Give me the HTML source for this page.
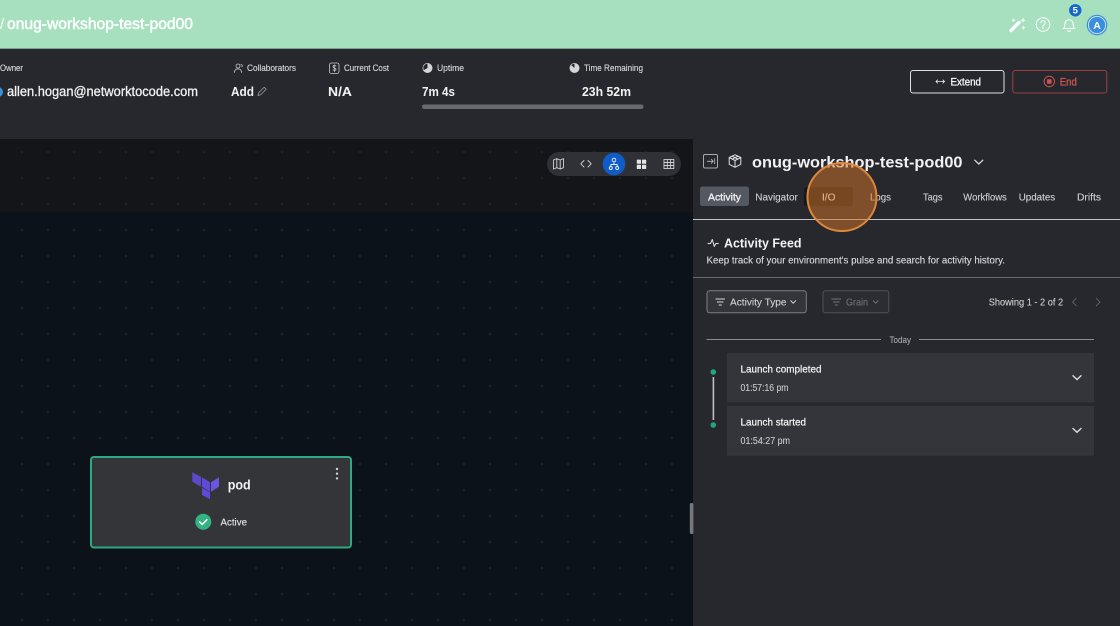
<!DOCTYPE html>
<html><head><meta charset="utf-8"><style>
html,body{margin:0;padding:0;background:#27282e;width:1120px;height:626px;overflow:hidden}
svg{display:block;filter:blur(.35px)}
text{font-family:"Liberation Sans",sans-serif;fill:#f2f2f2}
.m{stroke:currentColor;stroke-width:.25;color:#f2f2f2}
.b{font-weight:700}
.l{font-size:9px;fill:#d9dadb;stroke:#d9dadb;stroke-width:.12}
.v{font-size:13px;font-weight:700}
.t{font-size:10.500px;fill:#cfd0d2;stroke:#cfd0d2;stroke-width:.12}
.i{fill:none;stroke:#c9cacb;stroke-width:1;stroke-linecap:round;stroke-linejoin:round}
</style></head><body>
<svg width="1120" height="626" viewBox="0 0 1120 626" xmlns="http://www.w3.org/2000/svg">
<defs>
<pattern id="d" x="9" y="139" width="26" height="26" patternUnits="userSpaceOnUse"><circle cx="13" cy="13" r="1.300" fill="#1d2229"/></pattern>
</defs>
<!-- base -->
<rect width="1120" height="626" fill="#27282e"/>
<rect y="0" width="1120" height="49" fill="#a6e0bf"/>
<rect y="48" width="1120" height="1" fill="#7f9f90"/>
<!-- canvas -->
<rect x="0" y="139" width="693" height="487" fill="#0b121a"/>
<rect x="0" y="139" width="693" height="73" fill="#131519"/>
<rect x="0" y="139" width="693" height="487" fill="url(#d)"/>
<!-- header title -->
<text x="0" y="29" font-size="15" style="fill:#fff">/</text>
<text x="7" y="29" font-size="15.500" class="m" style="color:#fff;fill:#fff;stroke-width:.45" textLength="186" lengthAdjust="spacingAndGlyphs">onug-workshop-test-pod00</text>
<!-- header icons -->
<g fill="none" stroke="#fff" stroke-linecap="round">
<path d="M1011 30.500L1019 22.500" stroke-width="3.400"/>
<path d="M1023 18.500v3.500M1021.300 20.200h3.400M1013.500 19v2.400M1012.300 20.200h2.400M1023.500 26.500v2.400M1022.300 27.700h2.400" stroke-width="1"/>
<circle cx="1043" cy="24.500" r="6.800" stroke-width="1"/>
<path d="M1040.800 22.800a2.200 2.200 0 1 1 3.400 1.900c-.8.500-1.200.9-1.200 1.700" stroke-width="1"/>
<circle cx="1043" cy="28" r=".4" stroke-width=".8"/>
<path d="M1063.500 28.500c1.200-1.200 1.300-2.500 1.300-4.500a4.200 4.200 0 0 1 8.400 0c0 2 .1 3.300 1.300 4.500z" stroke-width="1"/>
<path d="M1067.500 30.500a1.600 1.600 0 0 0 3 0" stroke-width="1"/>
</g>
<circle cx="1075.300" cy="10.300" r="6.200" fill="#1468c8"/>
<text x="1075.300" y="13.700" font-size="9.500" class="b" text-anchor="middle" style="fill:#fff">5</text>
<circle cx="1097" cy="25" r="10.300" fill="#3a8fdc"/>
<circle cx="1097" cy="25" r="8.600" fill="#3a8fdc" stroke="#d5e8f6" stroke-width=".9"/>
<text x="1097" y="29" font-size="10.500" class="b" text-anchor="middle" style="fill:#fff">A</text>
<!-- stats labels -->
<text x="0" y="70.800" class="l" textLength="23" lengthAdjust="spacingAndGlyphs">Owner</text>
<text x="247" y="70.800" class="l" textLength="49" lengthAdjust="spacingAndGlyphs">Collaborators</text>
<text x="344" y="70.800" class="l" textLength="45" lengthAdjust="spacingAndGlyphs">Current Cost</text>
<text x="437" y="70.800" class="l" textLength="27" lengthAdjust="spacingAndGlyphs">Uptime</text>
<text x="584" y="70.800" class="l" textLength="59" lengthAdjust="spacingAndGlyphs">Time Remaining</text>
<!-- stat icons -->
<g class="i" style="stroke-width:.8">
<circle cx="238" cy="66" r="2"/><path d="M234.500 72.500c0-2.500 1.500-3.600 3.500-3.600s3.500 1.100 3.500 3.600M241 64.500a1.500 1.500 0 0 1 1 2.400"/>
<rect x="329.500" y="63" width="9.500" height="10.500" rx="2"/>
<path d="M336 66c-.6-.6-3-.8-3 .7s3 1 3 2.500-2.400 1.300-3 .7M334.300 64.800v7"/>
<circle cx="427.500" cy="68" r="4.600"/>
<circle cx="574.500" cy="68" r="4.600"/>
</g>
<path d="M427.500 68V63.400A4.600 4.600 0 1 1 423.500 70.300z" fill="#d4d5d6"/>
<path d="M574.500 68V63.400A4.600 4.600 0 1 1 570.500 70.300A4.600 4.600 0 0 1 571 65z" fill="#d4d5d6"/>
<!-- stats values -->
<circle cx="-2" cy="92" r="5" fill="#3d8fd9"/>
<text x="7" y="95.800" font-size="14" class="m" style="stroke-width:.3" textLength="191" lengthAdjust="spacingAndGlyphs">allen.hogan@networktocode.com</text>
<text x="231" y="95.800" class="v" textLength="23" lengthAdjust="spacingAndGlyphs">Add</text>
<path d="M258 95.500l.7-2.700 5.500-5.500 2 2-5.500 5.500z" class="i" style="stroke-width:.7;stroke:#a9aaac"/>
<text x="328" y="95.800" class="v" textLength="24" lengthAdjust="spacingAndGlyphs">N/A</text>
<text x="422" y="95.800" class="v" textLength="33" lengthAdjust="spacingAndGlyphs">7m 4s</text>
<text x="582" y="95.800" class="v" textLength="49" lengthAdjust="spacingAndGlyphs">23h 52m</text>
<rect x="422" y="104.500" width="221.500" height="4.500" rx="2.200" fill="#696a6d"/>
<!-- buttons -->
<rect x="910.500" y="70.500" width="93.500" height="22.500" rx="2.500" fill="none" stroke="#e0e0e0" stroke-width="1"/>
<path d="M936 81.500h8.500M937.800 79.700L936 81.500l1.800 1.800M942.700 79.700l1.800 1.800-1.800 1.800" fill="none" stroke="#eee" stroke-width=".8"/>
<text x="950.500" y="85.500" font-size="11" class="m" style="stroke-width:.35" textLength="30.500" lengthAdjust="spacingAndGlyphs">Extend</text>
<rect x="1012.800" y="70.500" width="94" height="22.500" rx="2.500" fill="none" stroke="#9a413c" stroke-width="1"/>
<circle cx="1049.300" cy="81.500" r="5.200" fill="none" stroke="#c9544b" stroke-width="1"/>
<rect x="1047" y="79.200" width="4.600" height="4.600" rx=".8" fill="#c9544b"/>
<text x="1059.800" y="85.500" font-size="11" class="m" style="fill:#c9544b;color:#c9544b;stroke-width:.35" textLength="17" lengthAdjust="spacingAndGlyphs">End</text>
<!-- toolbar -->
<rect x="547" y="152" width="134" height="24" rx="12" fill="#2f3136"/>
<circle cx="614" cy="164" r="11.300" fill="#0f5cc8"/>
<g class="i" style="stroke-width:.9;stroke:#d0d1d2">
<path d="M553.500 160l3.300-1.300 3.400 1.300 3.300-1.300v9l-3.300 1.300-3.400-1.300-3.300 1.300zM556.800 158.700v9M560.200 160v9"/>
<path d="M584 160.500l-3.200 3.300 3.200 3.300M588 160.500l3.200 3.300-3.200 3.300"/>
</g>
<g class="i" style="stroke-width:.9;stroke:#e8f0fa">
<circle cx="614" cy="160" r="1.800"/><circle cx="610.800" cy="168" r="1.500"/><circle cx="617.200" cy="168" r="1.500"/>
<path d="M614 162v2.500M610.800 166.500v-2h6.400v2"/>
</g>
<g fill="#e4e4e5">
<rect x="636.800" y="159.600" width="4.200" height="4.200" rx=".6"/><rect x="642" y="159.600" width="4.200" height="4.200" rx=".6"/>
<rect x="636.800" y="164.800" width="4.200" height="4.200" rx=".6"/><rect x="642" y="164.800" width="4.200" height="4.200" rx=".6"/>
</g>
<g fill="none" stroke="#d0d1d2" stroke-width=".9">
<rect x="664" y="159.500" width="9.800" height="9"/><path d="M664 162.500h9.800M664 165.500h9.800M667.300 159.500v9M670.600 159.500v9"/>
</g>
<!-- panel -->
<rect x="693" y="139" width="427" height="487" fill="#27282e"/>
<rect x="689.800" y="503" width="3.600" height="31" rx="1.500" fill="#77787c"/>
<!-- panel head -->
<rect x="703.500" y="154.500" width="14" height="13.500" rx="1.500" fill="none" stroke="#a9aaac" stroke-width="1"/>
<path d="M707 161.300h6M711 159l2.200 2.300-2.200 2.300M714.700 158.500v5.600" fill="none" stroke="#b9babc" stroke-width=".8"/>
<g class="i" style="stroke-width:1;stroke:#e0e0e1">
<path d="M735 154.800l5.800 2.700v6.800l-5.800 3-5.800-3v-6.800zM729.200 157.500l5.800 3 5.800-3M735 160.500v6.800M732 156.200l5.800 2.900M738 156.200l-5.800 2.900"/>
</g>
<text x="752" y="167.500" font-size="16" class="b" textLength="210.500" lengthAdjust="spacingAndGlyphs">onug-workshop-test-pod00</text>
<path d="M974.800 160.200l4 3.800 4-3.800" fill="none" stroke="#d8d8d9" stroke-width="1.300" stroke-linecap="round"/>
<!-- tabs -->
<rect x="700" y="186.500" width="49" height="19.500" rx="2.500" fill="#545861"/>
<rect x="804" y="187" width="49" height="19" rx="2.500" fill="#17181b"/>
<text x="708" y="200.700" font-size="10.500" class="m" style="stroke-width:.3" textLength="33" lengthAdjust="spacingAndGlyphs">Activity</text>
<text x="755.300" y="200.700" class="t" textLength="42.500" lengthAdjust="spacingAndGlyphs">Navigator</text>
<text x="822" y="200.700" class="t" textLength="13.500" lengthAdjust="spacingAndGlyphs" style="fill:#f0f0f0;stroke:#f0f0f0">I/O</text>
<text x="870" y="200.700" class="t" textLength="21" lengthAdjust="spacingAndGlyphs">Logs</text>
<text x="923" y="200.700" class="t" textLength="19.500" lengthAdjust="spacingAndGlyphs">Tags</text>
<text x="963.300" y="200.700" class="t" textLength="43.500" lengthAdjust="spacingAndGlyphs">Workflows</text>
<text x="1018.700" y="200.700" class="t" textLength="36.500" lengthAdjust="spacingAndGlyphs">Updates</text>
<text x="1077" y="200.700" class="t" textLength="24" lengthAdjust="spacingAndGlyphs">Drifts</text>
<rect x="693" y="219" width="427" height="1" fill="#c4c5c6"/>
<!-- orange highlight -->
<ellipse cx="842" cy="197" rx="34.500" ry="34" fill="#d8762a" fill-opacity=".5" stroke="#de873a" stroke-width="2"/>
<!-- activity feed -->
<path d="M708 243.500h2.500l1.800-4 2 7 1.500-3h2.500" class="i" style="stroke:#e4e4e5"/>
<text x="724" y="247.300" font-size="12.500" class="b" textLength="77.500" lengthAdjust="spacingAndGlyphs">Activity Feed</text>
<text x="706.500" y="263.500" font-size="10.500" style="fill:#dcdcdd;stroke:#dcdcdd;stroke-width:.12" textLength="298.500" lengthAdjust="spacingAndGlyphs">Keep track of your environment's pulse and search for activity history.</text>
<rect x="693" y="277" width="427" height="1" fill="#66686b"/>
<rect x="707" y="290.800" width="99.300" height="22" rx="2.500" fill="#33353b" stroke="#7c7f85" stroke-width="1"/>
<path d="M715.500 299h9.500M717 302h6.500M718.800 305h3" fill="none" stroke="#d6d6d7" stroke-width="1"/>
<text x="730" y="305.500" font-size="10.500" style="fill:#cfd0d1;stroke:#cfd0d1;stroke-width:.12" textLength="56.500" lengthAdjust="spacingAndGlyphs">Activity Type</text>
<path d="M790.500 300.500l2.700 2.700 2.700-2.700" fill="none" stroke="#d6d6d7" stroke-width="1"/>
<rect x="823" y="290.800" width="65.800" height="22" rx="2.500" fill="#2b2d32" stroke="#505257" stroke-width="1"/>
<path d="M831.500 299h9.500M833 302h6.500M834.800 305h3" fill="none" stroke="#717377" stroke-width="1"/>
<text x="846" y="305.500" font-size="10.500" style="fill:#77797c" textLength="22" lengthAdjust="spacingAndGlyphs">Grain</text>
<path d="M873 300.500l2.700 2.700 2.700-2.700" fill="none" stroke="#717377" stroke-width="1"/>
<text x="988.700" y="305.500" font-size="10.500" style="fill:#cfd0d1;stroke:#cfd0d1;stroke-width:.12" textLength="74.500" lengthAdjust="spacingAndGlyphs">Showing 1 - 2 of 2</text>
<path d="M1076.500 298l-4 4 4 4M1096 298l4 4-4 4" fill="none" stroke="#5c5e62" stroke-width="1"/>
<!-- today -->
<rect x="706.500" y="339" width="174.500" height="1" fill="#8b8c8f"/>
<rect x="919" y="339" width="175" height="1" fill="#8b8c8f"/>
<text x="889.500" y="342.800" font-size="9" style="fill:#b8b9bb" textLength="21.500" lengthAdjust="spacingAndGlyphs">Today</text>
<!-- cards -->
<rect x="727" y="353" width="367" height="49.500" fill="#33353a"/>
<rect x="727" y="406" width="367" height="49.700" fill="#33353a"/>
<text x="740.500" y="372.500" font-size="10.500" class="m" textLength="81" lengthAdjust="spacingAndGlyphs">Launch completed</text>
<text x="740.500" y="390.900" font-size="10.500" style="fill:#c8c9ca;stroke:#c8c9ca;stroke-width:.12" textLength="48" lengthAdjust="spacingAndGlyphs">01:57:16 pm</text>
<text x="740.500" y="425.500" font-size="10.500" class="m" textLength="65.500" lengthAdjust="spacingAndGlyphs">Launch started</text>
<text x="740.500" y="443.900" font-size="10.500" style="fill:#c8c9ca;stroke:#c8c9ca;stroke-width:.12" textLength="49.500" lengthAdjust="spacingAndGlyphs">01:54:27 pm</text>
<path d="M1073 375.700l4 3.800 4-3.800M1073 428.500l4 3.800 4-3.800" fill="none" stroke="#dcdcdd" stroke-width="1.400" stroke-linecap="round"/>
<circle cx="713.300" cy="372" r="2.800" fill="#1fa87e"/>
<circle cx="713.300" cy="425" r="2.800" fill="#1fa87e"/>
<rect x="712.600" y="377" width="1.600" height="43" fill="#bdbec0"/>
<!-- node -->
<rect x="91" y="457" width="260" height="90.500" rx="3" fill="#343539" stroke="#2fa981" stroke-width="2"/>
<g fill="#5e4ad6">
<polygon points="192.300,472.300 201,476.700 201,486.700 192.300,481.700" fill="#5a49c9"/>
<polygon points="202,477.300 210,482.300 210,491.700 202,486.700"/>
<polygon points="211,482.300 219,477.300 219,486.700 211,491.700" fill="#6a55e4"/>
<polygon points="202,487.700 210,492.300 210,499.300 202,495"/>
</g>
<text x="227.700" y="489.500" font-size="13.500" class="b" textLength="23" lengthAdjust="spacingAndGlyphs">pod</text>
<g fill="#cfd0d1"><circle cx="337" cy="469" r="1.200"/><circle cx="337" cy="473.700" r="1.200"/><circle cx="337" cy="478.400" r="1.200"/></g>
<circle cx="203.300" cy="521.700" r="8" fill="#35b283"/>
<path d="M199.600 521.800l2.700 2.600 4.600-4.700" fill="none" stroke="#fff" stroke-width="1.500" stroke-linecap="round"/>
<text x="220.500" y="525.500" font-size="10.500" style="fill:#e6e6e7;stroke:#e6e6e7;stroke-width:.12" textLength="26.500" lengthAdjust="spacingAndGlyphs">Active</text>
</svg>
</body></html>
